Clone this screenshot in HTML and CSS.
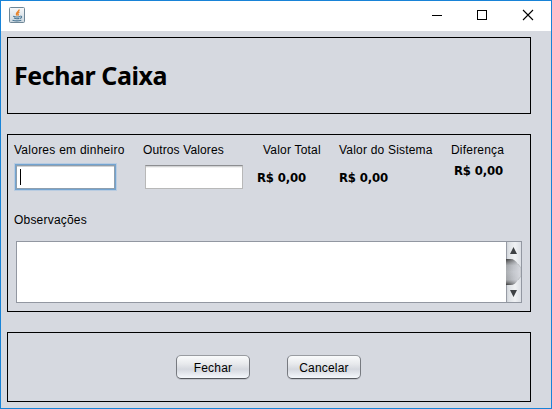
FILE: index.html
```html
<!DOCTYPE html>
<html lang="pt-BR">
<head>
<meta charset="utf-8">
<title>Fechar Caixa</title>
<link rel="stylesheet" href="styles.css">
</head>
<body>
<div class="window">
  <header class="titlebar">
    <svg class="java" width="16" height="16" viewBox="0 0 16 16">
      <defs><linearGradient id="tile" x2="0" y2="1"><stop offset="0" stop-color="#f7f8f9"/><stop offset="1" stop-color="#cbd7df"/></linearGradient></defs>
      <rect x=".5" y=".5" width="15" height="15" rx="1" fill="url(#tile)" stroke="#6f8797"/>
      <path d="M10.200 2.500C10.500 4.500 6 5 7.800 8.500M10.500 5.200C8.300 5.900 8.700 7 9.300 7.600L8.800 8.600" fill="none" stroke="#e8842c" stroke-width="1.300"/>
      <path d="M4.200 9.300C6 10.200 9 10.100 11 9.400M11.300 9.200C13.300 8.900 13 10.900 11 11.400M5 11.100C6.500 11.800 9 11.800 10.400 11.400M3.500 13.200C6 14 10 13.900 12.300 13.200" fill="none" stroke="#4c7896" stroke-width="1.100"/>
    </svg>
    <div class="controls">
      <svg width="45" height="30" viewBox="0 0 45 30" shape-rendering="crispEdges"><path d="M17 14.500h10" stroke="#000"/></svg>
      <svg width="45" height="30" viewBox="0 0 45 30" shape-rendering="crispEdges"><path d="M17.500 9.500h9v9h-9z" fill="none" stroke="#000"/></svg>
      <svg width="45" height="30" viewBox="0 0 45 30"><path d="M18 9l10 10M28 9l-10 10" stroke="#000" stroke-width="1.100"/></svg>
    </div>
  </header>
  <main>
    <section class="panel heading"><h1>Fechar Caixa</h1></section>
    <section class="panel details">
      <div class="columns">
        <div class="col cash"><label for="cash">Valores em dinheiro</label><div class="field focused" id="cash"><span class="caret"></span></div></div>
        <div class="col other"><label for="other">Outros Valores</label><div class="field" id="other"></div></div>
        <div class="col total"><span class="label">Valor Total</span><strong>R$ 0,00</strong></div>
        <div class="col system"><span class="label">Valor do Sistema</span><strong>R$ 0,00</strong></div>
        <div class="col diff"><span class="label">Diferença</span><strong>R$ 0,00</strong></div>
      </div>
      <div class="label notes-label">Observações</div>
      <div class="notes">
        <div class="notes-text"></div>
        <svg class="scroll" width="15" height="60" viewBox="0 0 15 60">
          <defs>
            <linearGradient id="track"><stop offset="0" stop-color="#c9ced3"/><stop offset=".2" stop-color="#dfe2e6"/><stop offset=".6" stop-color="#f0f2f4"/><stop offset="1" stop-color="#dcdfe5"/></linearGradient>
            <linearGradient id="thumb"><stop offset="0" stop-color="#acafb3"/><stop offset=".5" stop-color="#c6c9cf"/><stop offset="1" stop-color="#d8dae0"/></linearGradient>
            <linearGradient id="shade" x2="0" y2="1"><stop offset="0" stop-color="#333" stop-opacity=".95"/><stop offset=".25" stop-color="#555" stop-opacity=".12"/><stop offset=".5" stop-color="#555" stop-opacity="0"/><stop offset=".8" stop-color="#555" stop-opacity=".12"/><stop offset="1" stop-color="#333" stop-opacity=".95"/></linearGradient>
            <linearGradient id="fade"><stop offset="0" stop-color="#fff"/><stop offset=".7" stop-color="#fff" stop-opacity=".35"/><stop offset="1" stop-color="#fff" stop-opacity="0"/></linearGradient>
            <mask id="m"><rect width="15" height="60" fill="url(#fade)"/></mask>
          </defs>
          <rect width="15" height="60" fill="url(#track)"/>
          <path d="M0 17H4C8 17 10 19 12 22L15 26V34L12 38C10 41 8 43 4 43H0Z" fill="url(#thumb)"/>
          <path d="M0 17H4C8 17 10 19 12 22L15 26V34L12 38C10 41 8 43 4 43H0Z" fill="url(#shade)" mask="url(#m)"/>
          <path d="M12 22L15 26V34L12 38" fill="none" stroke="#b1b4b8" stroke-width=".7"/>
          <path d="M4 12L7.500 5L11 12ZM4 48L7.500 55L11 48Z" fill="#3e4144"/>
          <path d="M.5 0V17M.5 43V60" stroke="#979ba5"/>
        </svg>
      </div>
    </section>
    <section class="panel actions"><button>Fechar</button><button>Cancelar</button></section>
  </main>
</div>
</body>
</html>
```

FILE: styles.css
```css
* { box-sizing: border-box; }
body { margin: 0; font: 12px/16px "Liberation Sans", Arial, sans-serif; color: #000; }
.window { width: 552px; height: 409px; border: 1px solid #1883d7; background: #d6d9e0; }
.titlebar { height: 30px; background: #fff; display: flex; justify-content: space-between; padding: 0 1px 0 8px; }
.java { margin-top: 6px; }
.controls { display: flex; }
.controls svg { display: block; }
main { display: flex; flex-direction: column; padding: 6px 20px 0 6px; }
.panel { border: 1px solid #000; }
.heading { height: 77px; padding: 22px 0 0 6px; }
h1 { margin: 0; font: bold 25px/30px "Noto Sans", sans-serif; letter-spacing: -.45px; }
.details { height: 178px; margin-top: 20px; padding: 7px 8px 0 6px; }
.columns { display: flex; height: 62px; }
.col { display: flex; flex-direction: column; align-items: flex-start; white-space: nowrap; }
.label, label { letter-spacing: .2px; }
.cash { width: 129px; }
.cash label { letter-spacing: .25px; }
.other { width: 114px; }
.other label { letter-spacing: .12px; }
.total { width: 82px; }
.total .label { margin-left: 6px; }
.system { width: 112px; }
strong { margin-top: 12px; font: bold 13px/16px "DejaVu Sans Condensed", "DejaVu Sans", sans-serif; letter-spacing: -.15px; }
.diff strong { margin: 5px 0 0 3px; }
.field { width: 98px; height: 24px; margin: 7px 0 0 2px; background: #fff; border: 1px solid #b8b8b8; border-top-color: #8d8e91; box-shadow: inset 0 1px #d3d4d5, inset 0 2px #f2f2f2; }
.focused { border-color: #8f9fae; width: 99px; box-shadow: inset 0 1px #d3d4d5, 0 0 0 1px #73a4d1, 0 0 0 2px #b9cce1; padding: 3px 0 0 3px; }
.caret { display: block; width: 1px; height: 16px; background: #000; }
.notes-label { margin-top: 8px; }
.notes { display: flex; width: 506px; height: 62px; margin: 13px 0 0 2px; border: 1px solid #9297a1; background: #fff; }
.notes-text { flex: 1; }
.scroll { display: block; }
.actions { height: 70px; margin-top: 20px; padding: 22px 0 0 168px; display: flex; gap: 37px; align-items: flex-start; }
button { width: 74px; height: 24px; padding: 1px 0 0; font: 12px/16px "Liberation Sans", Arial, sans-serif; letter-spacing: .2px; color: #000; border: 1px solid; border-color: #999ca1 #777a80 #55585e; border-radius: 5px; background: linear-gradient(#fafbfc, #e8eaed 35%, #d5d8df 60%, #eef1f6 92%, #f5f8fc); box-shadow: 0 1px 0 #bfc2c9; }
```
